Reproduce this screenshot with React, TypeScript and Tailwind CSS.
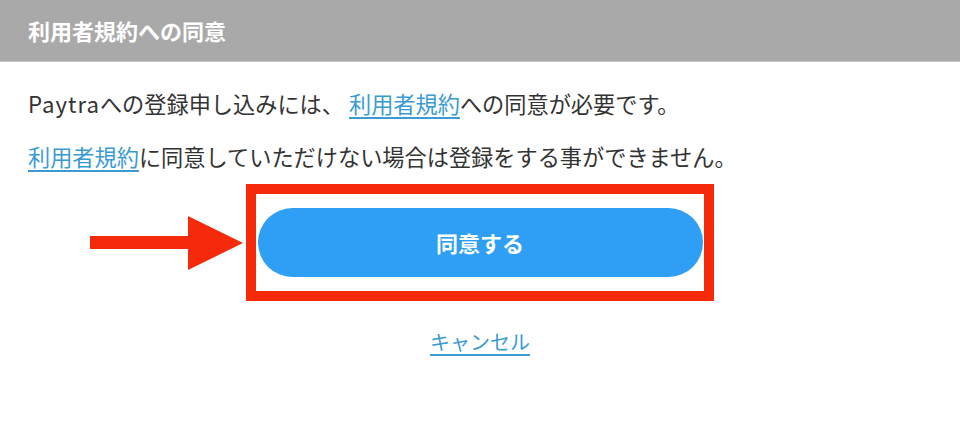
export default function App() {
  const font = { fontFamily: '"Noto Sans CJK JP", "Noto Sans", sans-serif' };
  return (
    <div className="min-h-screen w-full bg-white text-[#333]" style={font}>
      {/* Header */}
      <div className="flex h-[62px] items-center border-b border-[#c4c4c4] bg-[#a9a9a9] px-[28px]">
        <h1 className="text-[22px] font-bold text-white">利用者規約への同意</h1>
      </div>

      {/* Body */}
      <div className="flex flex-col">
        <p className="mt-[25px] px-[28px] text-[22.2px] leading-[32px]">
          <span className="tracking-[1px]">Paytra</span>への登録申し込みには、{" "}
          <a href="#" className="text-[#3a9bd3] underline underline-offset-4">利用者規約</a>
          への同意が必要です。
        </p>
        <p className="mt-[21px] px-[28px] text-[22.2px] leading-[32px]">
          <a href="#" className="text-[#3a9bd3] underline underline-offset-4">利用者規約</a>
          に同意していただけない場合は登録をする事ができません。
        </p>

        {/* Agree button with annotation */}
        <div className="mt-[12px] flex justify-center">
          <div className="relative box-border flex h-[117px] w-[468px] items-center justify-center border-[10px] border-[#f52a0a]">
            <svg
              className="absolute top-1/2 right-full mr-[13px] h-[54px] w-[153px] -translate-y-1/2"
              viewBox="0 0 153 54"
            >
              <rect x="0" y="20" width="100" height="13" fill="#f52a0a" />
              <polygon points="98,0 153,27 98,54" fill="#f52a0a" />
            </svg>
            <button className="h-[69px] w-[445px] rounded-full bg-[#2f9ff5] text-[22px] font-bold text-white">
              同意する
            </button>
          </div>
        </div>

        <div className="mt-[27px] flex justify-center">
          <a href="#" className="text-[20px] leading-[28px] text-[#3a9bd3] underline underline-offset-4">
            キャンセル
          </a>
        </div>
      </div>
    </div>
  );
}
